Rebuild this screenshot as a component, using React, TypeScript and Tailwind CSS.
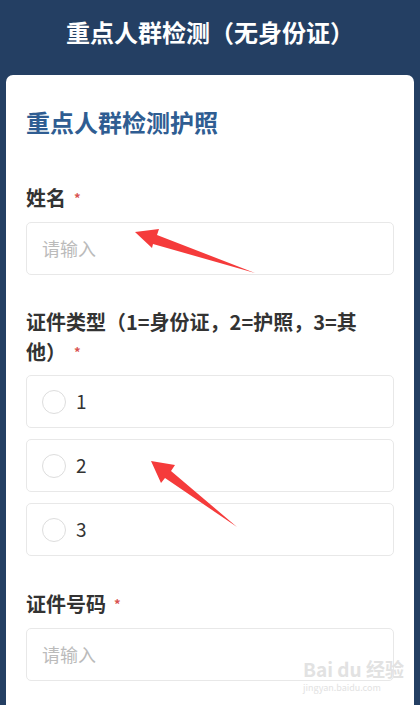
const font = { fontFamily: '"Noto Sans CJK SC", "Noto Sans", sans-serif' };

function Label({ children }: { children: React.ReactNode }) {
  return (
    <div className="text-[20px] font-bold leading-[30px] text-[#333333]">
      {children}
      <span className="ml-2 align-top text-[13px] text-[#d9534f]">*</span>
    </div>
  );
}

function TextInput() {
  return (
    <div className="mt-[9px] flex h-[53px] items-center rounded-[5px] border border-[#e8e8e8] px-[15px] text-[18px] text-[#bbbbbb]">
      请输入
    </div>
  );
}

function Radio({ value }: { value: string }) {
  return (
    <div className="flex h-[53px] items-center gap-[10px] rounded-[5px] border border-[#e8e8e8] px-[15px]">
      <span className="h-6 w-6 rounded-full border-[1.5px] border-[#dddddd]" />
      <span className="text-[19px] text-[#333333]">{value}</span>
    </div>
  );
}

export default function App() {
  return (
    <div className="relative min-h-screen overflow-hidden bg-[#243f63]" style={font}>
      <header className="flex h-[64px] items-center justify-center">
        <h1 className="text-[24px] font-bold leading-8 text-white">重点人群检测（无身份证）</h1>
      </header>

      <main className="mx-1.5 mt-[11px] min-h-[700px] rounded-t-[7px] bg-white px-5 pt-[31px]">
        <h2 className="text-[24px] font-bold leading-8 text-[#2f5d92]">重点人群检测护照</h2>

        <div className="mt-[45px]">
          <Label>姓名</Label>
          <TextInput />
        </div>

        <div className="mt-8">
          <Label>
            证件类型（1=身份证，2=护照，3=其
            <br />
            他）
          </Label>
          <div className="mt-2 flex flex-col gap-[11px]">
            <Radio value="1" />
            <Radio value="2" />
            <Radio value="3" />
          </div>
        </div>

        <div className="mt-[33px]">
          <Label>证件号码</Label>
          <TextInput />
        </div>
      </main>

      {/* annotation arrows */}
      <svg className="pointer-events-none absolute left-0 top-0" width="420" height="705" viewBox="0 0 420 705">
        <polygon points="135,232 159,229 157,235 255,273 153,244 152,248" fill="#f53b3b" />
        <polygon points="151,461 175,465 171,471 237,527 165,478 161,483" fill="#f53b3b" />
      </svg>

      <div className="pointer-events-none absolute left-[303px] top-[658px] flex flex-col gap-[3px] text-[#e2e2e2]">
        <div className="text-[19px] font-bold leading-[22px]">Bai du 经验</div>
        <div className="text-[9px] leading-[10px]">jingyan.baidu.com</div>
      </div>
    </div>
  );
}
